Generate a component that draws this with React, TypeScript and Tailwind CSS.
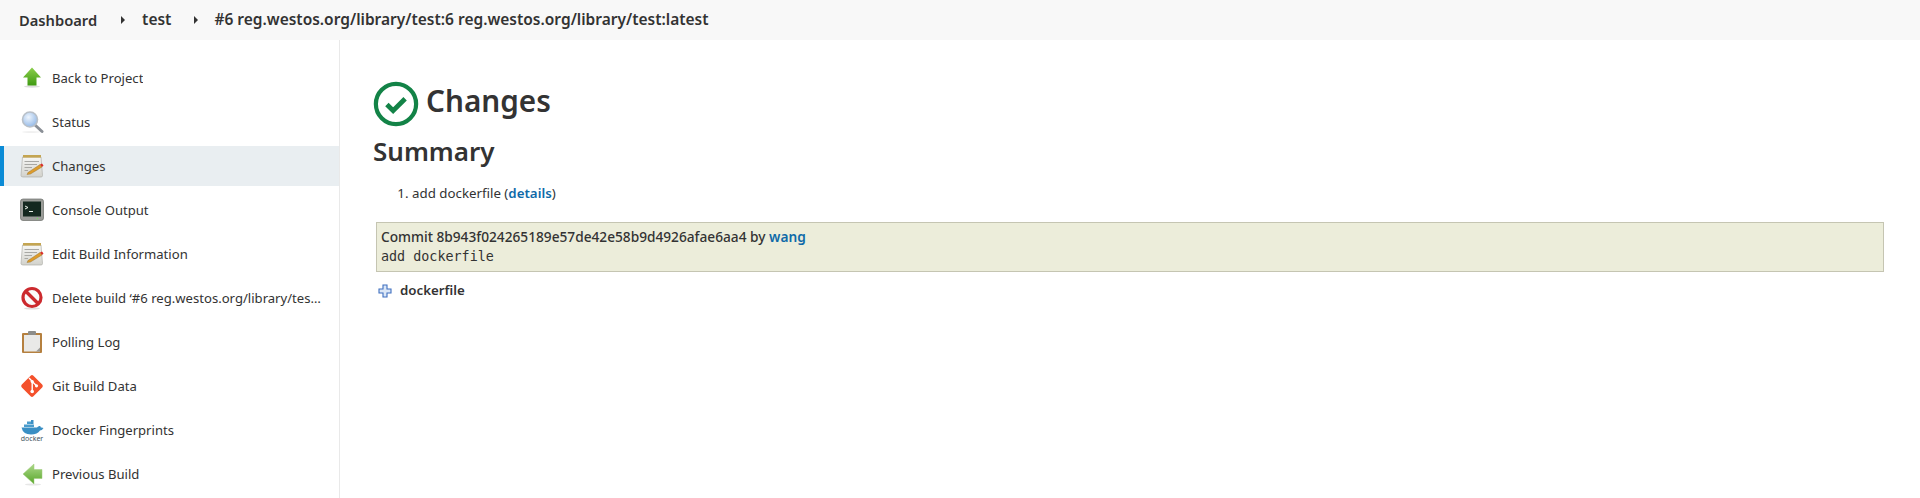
import type { ReactNode } from "react"

function UpArrow() {
  return (
    <svg viewBox="0 0 24 24" className="w-6 h-6">
      <defs>
        <linearGradient id="up" x1="0" y1="0" x2="0" y2="1">
          <stop offset="0" stopColor="#8ccf4d" />
          <stop offset="1" stopColor="#3f9a12" />
        </linearGradient>
      </defs>
      <ellipse cx="12" cy="20.5" rx="8" ry="1.2" fill="#00000022" />
      <path d="M12 1.5 L21 11.5 H16.5 V19.5 H7.5 V11.5 H3 Z" fill="url(#up)" />
    </svg>
  )
}

function LeftArrow() {
  return (
    <svg viewBox="0 0 24 24" className="w-6 h-6">
      <defs>
        <linearGradient id="left" x1="0" y1="0" x2="0" y2="1">
          <stop offset="0" stopColor="#add98a" />
          <stop offset="1" stopColor="#58a62a" />
        </linearGradient>
      </defs>
      <ellipse cx="13" cy="22.5" rx="8" ry="1" fill="#00000018" />
      <path d="M3 12 L14 2 V7.5 H22 V16.5 H14 V22 Z" fill="url(#left)" stroke="#9ccb78" strokeWidth="0.5" />
    </svg>
  )
}

function Magnifier() {
  return (
    <svg viewBox="0 0 24 24" className="w-6 h-6">
      <defs>
        <radialGradient id="glass" cx="0.4" cy="0.35" r="0.7">
          <stop offset="0" stopColor="#eef5fd" />
          <stop offset="1" stopColor="#8fb6e6" />
        </radialGradient>
      </defs>
      <ellipse cx="11" cy="22" rx="9" ry="0.8" fill="#00000014" />
      <path d="M15 15 L22 21.5" stroke="#8a8f96" strokeWidth="3" strokeLinecap="round" />
      <circle cx="10" cy="9.5" r="7.5" fill="url(#glass)" stroke="#b9c0c8" strokeWidth="1.6" />
    </svg>
  )
}

function Notepad() {
  return (
    <svg viewBox="0 0 24 24" className="w-6 h-6">
      <defs>
        <linearGradient id="pad" x1="0" y1="0" x2="0" y2="1">
          <stop offset="0" stopColor="#f7f7f5" />
          <stop offset="1" stopColor="#d2d2cc" />
        </linearGradient>
      </defs>
      <path d="M2.5 3 H21 L22.5 21.5 Q22.5 23 21 23 H3 Q1 23 1 21.5 Z" fill="url(#pad)" stroke="#b0b0aa" strokeWidth="0.7" />
      <rect x="3" y="1" width="18" height="2.6" fill="#c4a552" />
      <path d="M4.5 7.5 H19 M4.5 10.5 H17 M4.5 13.5 H12 M4.5 16.5 H8" stroke="#a8a8a4" strokeWidth="1" />
      <path d="M8 18.5 L20 10.5 L22 13 L10.5 20 L7 20.5 Z" fill="#dd9c2c" stroke="#8a6a2a" strokeWidth="0.4" />
      <path d="M20 10.5 L22 13 L23.5 11.5 L22 9.5 Z" fill="#d9302a" />
    </svg>
  )
}

function Terminal() {
  return (
    <svg viewBox="0 0 24 24" className="w-6 h-6">
      <rect x="0.5" y="1" width="23" height="21.5" rx="2.5" fill="#9a9c98" stroke="#6c6e6a" strokeWidth="0.7" />
      <rect x="3" y="3.5" width="18" height="15" fill="#14281f" />
      <path d="M5 8 L8 9.5 L5 11" stroke="#e8f0e8" strokeWidth="1" fill="none" />
      <path d="M9 13.5 H13" stroke="#e8f0e8" strokeWidth="1" />
      <circle cx="17.5" cy="20.5" r="0.7" fill="#6fe05a" />
    </svg>
  )
}

function NoEntry() {
  return (
    <svg viewBox="0 0 24 24" className="w-6 h-6">
      <ellipse cx="12" cy="22.5" rx="8" ry="0.9" fill="#00000020" />
      <circle cx="12" cy="11.5" r="9" fill="#fbfbfb" stroke="#cc2a2e" strokeWidth="3.2" />
      <path d="M5.5 5 L18.5 18" stroke="#cc2a2e" strokeWidth="3.4" />
    </svg>
  )
}

function Clipboard() {
  return (
    <svg viewBox="0 0 24 24" className="w-6 h-6">
      <rect x="2" y="3" width="20" height="20" rx="1" fill="#b5803f" />
      <rect x="4" y="5" width="16" height="16.5" fill="#e9e9e7" />
      <path d="M16 21.5 L20 17.5 V21.5 Z" fill="#9c9c98" />
      <rect x="8" y="1" width="8" height="4" rx="1" fill="#8d8d8a" />
    </svg>
  )
}

function GitLogo() {
  return (
    <svg viewBox="0 0 24 24" className="w-6 h-6">
      <rect x="3.8" y="3.8" width="16.4" height="16.4" rx="2" transform="rotate(45 12 12)" fill="#f4512c" />
      <path d="M9 4 L12.2 7.2 V17 M12.2 7.5 L16.5 11.8" stroke="#fff" strokeWidth="1.4" fill="none" />
      <circle cx="12.2" cy="7.5" r="1.6" fill="#fff" />
      <circle cx="12.2" cy="17.5" r="1.8" fill="#fff" />
      <circle cx="16.5" cy="11.8" r="1.6" fill="#fff" />
    </svg>
  )
}

function DockerLogo() {
  return (
    <svg viewBox="0 0 24 24" className="w-6 h-6">
      <path d="M1.5 9.5 H17 Q18.5 7.5 20 8 Q21 8.5 20.8 9.5 Q22.5 9.3 23.5 10 Q22 12.5 20 12.5 Q17.5 16.5 11 16.5 Q3 16.5 1.5 9.5 Z" fill="#3a8fc4" />
      <rect x="4" y="6.5" width="10" height="2.5" fill="#4a9ccc" />
      <rect x="7" y="3.5" width="4" height="2.5" fill="#4a9ccc" />
      <rect x="11" y="2" width="2.5" height="4" fill="#3a8fc4" />
      <text x="12" y="23" textAnchor="middle" fontSize="7" fill="#3f5560" fontFamily="Noto Sans, sans-serif">docker</text>
    </svg>
  )
}

function SuccessIcon() {
  return (
    <svg viewBox="0 0 48 48" className="w-[46px] h-[46px] shrink-0 mt-[6px]">
      <circle cx="24" cy="24" r="21" fill="none" stroke="#138347" strokeWidth="4.4" />
      <path d="M14.5 24.5 L21 31 L33.5 18.5" fill="none" stroke="#138347" strokeWidth="5" />
    </svg>
  )
}

function AddedIcon() {
  return (
    <svg viewBox="0 0 14 14" className="w-[14px] h-[14px]">
      <path d="M5 1 H9 V5 H13 V9 H9 V13 H5 V9 H1 V5 H5 Z" fill="#dbe7f7" stroke="#3f6fc0" strokeWidth="1.1" />
    </svg>
  )
}

function Caret() {
  return <span className="block w-0 h-0 border-y-[4px] border-y-transparent border-l-[4px] border-l-[#333]" />
}

const tasks: { label: string; icon: ReactNode; active?: boolean }[] = [
  { label: "Back to Project", icon: <UpArrow /> },
  { label: "Status", icon: <Magnifier /> },
  { label: "Changes", icon: <Notepad />, active: true },
  { label: "Console Output", icon: <Terminal /> },
  { label: "Edit Build Information", icon: <Notepad /> },
  { label: "Delete build ‘#6 reg.westos.org/library/test:6 reg.westos.org/library/test:latest’", icon: <NoEntry /> },
  { label: "Polling Log", icon: <Clipboard /> },
  { label: "Git Build Data", icon: <GitLogo /> },
  { label: "Docker Fingerprints", icon: <DockerLogo /> },
  { label: "Previous Build", icon: <LeftArrow /> },
]

export default function App() {
  return (
    <div className="h-[498px] overflow-hidden bg-white text-[#333] text-[13.3px] font-['Noto_Sans',sans-serif] flex flex-col">
      {/* Breadcrumbs */}
      <div className="h-10 shrink-0 bg-[#f8f8f8] flex items-center pl-[19px] text-[15.5px] font-semibold text-[#333]">
        <span className="text-[14.7px]">Dashboard</span>
        <span className="ml-6 mr-[17px]"><Caret /></span>
        <span>test</span>
        <span className="ml-[23px] mr-4"><Caret /></span>
        <span>#6 reg.westos.org/library/test:6 reg.westos.org/library/test:latest</span>
      </div>

      <div className="flex-1 flex min-h-0">
        {/* Side panel */}
        <div className="w-[340px] shrink-0 border-r border-[#e9e9e9] pt-[18px] flex flex-col gap-1 text-[13.1px]">
          {tasks.map((t) => (
            <div
              key={t.label}
              className={`h-10 shrink-0 flex items-center gap-[8px] pr-[15px] ${
                t.active ? "bg-[#e9eef1] border-l-4 border-[#0b8bd6] pl-4" : "pl-5"
              }`}
            >
              <span className="w-6 h-6 shrink-0">{t.icon}</span>
              <span className="truncate pt-px">{t.label}</span>
            </div>
          ))}
        </div>

        {/* Main */}
        <div className="flex-1 min-w-0 pl-[33px] pr-9">
          <div className="flex items-center gap-[7px] mt-[37px] h-[48px]">
            <SuccessIcon />
            <h1 className="text-[29.7px] font-semibold leading-none">Changes</h1>
          </div>
          <h2 className="text-[26px] font-semibold leading-none mt-[13px]">Summary</h2>
          <ol className="list-decimal pl-[39px] mt-[19px] leading-5">
            <li>
              add dockerfile (<a className="text-[#0f6aa8] font-semibold">details</a>)
            </li>
          </ol>
          <div className="mt-[19px] ml-[3px] h-[50px] border border-[#c5c5b2] bg-[#ecedda] px-1 py-1 leading-5">
            <div className="font-medium text-[13.7px]">
              Commit 8b943f024265189e57de42e58b9d4926afae6aa4 by{" "}
              <a className="text-[#0f6aa8] font-semibold">wang</a>
            </div>
            <div className="font-['DejaVu_Sans_Mono',monospace] text-[13.4px]">add dockerfile</div>
          </div>
          <div className="flex items-center gap-[8px] ml-[5px] mt-[9px] h-5">
            <AddedIcon />
            <span className="font-semibold">dockerfile</span>
          </div>
        </div>
      </div>
    </div>
  )
}
